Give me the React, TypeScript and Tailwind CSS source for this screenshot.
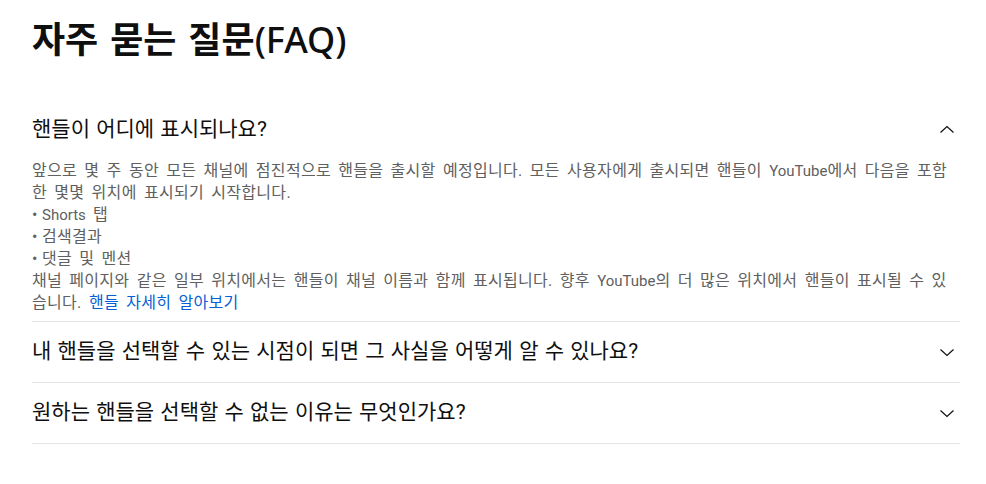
import { useState } from "react";

type FaqItem = {
  question: string;
  answer?: React.ReactNode;
};

const faqItems: FaqItem[] = [
  {
    question: "핸들이 어디에 표시되나요?",
    answer: (
      <>
        <p>
          앞으로 몇 주 동안 모든 채널에 점진적으로 핸들을 출시할 예정입니다. 모든
          사용자에게 출시되면 핸들이 <span className="text-[15px] tracking-normal">YouTube</span>에서
          다음을 포함한 몇몇 위치에 표시되기 시작합니다.
        </p>
        <p>
          •<span className="[word-spacing:0px]"> </span>
          <span className="text-[15px] tracking-normal">Shorts</span> 탭
        </p>
        <p>•<span className="[word-spacing:0px]"> </span>검색결과</p>
        <p>•<span className="[word-spacing:0px]"> </span>댓글 및 멘션</p>
        <p>
          채널 페이지와 같은 일부 위치에서는 핸들이 채널 이름과 함께 표시됩니다.
          향후 <span className="text-[15px] tracking-normal">YouTube</span>의 더 많은
          위치에서 핸들이 표시될 수 있습니다.{" "}
          <a href="#" className="text-[#065fd4]">
            핸들 자세히 알아보기
          </a>
        </p>
      </>
    ),
  },
  { question: "내 핸들을 선택할 수 있는 시점이 되면 그 사실을 어떻게 알 수 있나요?" },
  { question: "원하는 핸들을 선택할 수 없는 이유는 무엇인가요?" },
];

function Chevron({ open }: { open: boolean }) {
  return (
    <svg
      width="24"
      height="24"
      viewBox="0 0 24 24"
      fill="none"
      stroke="#0f0f0f"
      strokeWidth="1.2"
      className={open ? "rotate-180" : ""}
    >
      <path d="M5.5 9.5 12 15.5l6.5-6" />
    </svg>
  );
}

export default function App() {
  const [openIndex, setOpenIndex] = useState<number | null>(0);

  return (
    <div className="min-h-screen bg-white px-8 pt-4 font-['Roboto','Noto_Sans_CJK_KR',sans-serif]">
      <h1 className="text-[36px] leading-[48px] font-bold text-[#0f0f0f] [word-spacing:3px]">
        자주 묻는 질문
        <span className="font-['Noto_Sans','Noto_Sans_CJK_KR',sans-serif] font-medium">
          (FAQ)
        </span>
      </h1>

      <div className="mt-[35px] w-[928px]">
        {faqItems.map((item, index) => {
          const isOpen = openIndex === index;

          return (
            <div key={item.question} className="border-b border-[#e5e5e5]">
              <button
                type="button"
                onClick={() => setOpenIndex(isOpen ? null : index)}
                className="flex h-[60px] w-full items-center justify-between text-left"
              >
                <span className="text-[21px] text-[#0f0f0f] [word-spacing:1px]">
                  {item.question}
                </span>
                <span className="mr-[1px]">
                  <Chevron open={isOpen} />
                </span>
              </button>

              {isOpen && item.answer && (
                <div className="pb-[7px] text-[16px] leading-[22px] tracking-[0.3px] text-[#606060] [word-spacing:3px]">
                  {item.answer}
                </div>
              )}
            </div>
          );
        })}
      </div>
    </div>
  );
}
